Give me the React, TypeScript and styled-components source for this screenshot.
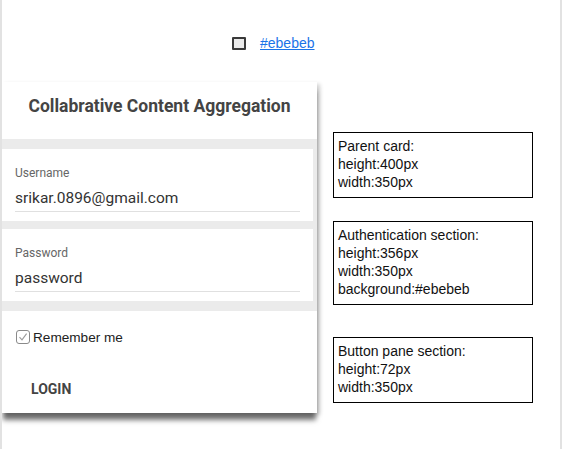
import React from "react";
import styled, { createGlobalStyle } from "styled-components";

const GlobalStyle = createGlobalStyle`
  html, body { margin: 0; padding: 0; background: #ffffff; }
  body { font-family: "Liberation Sans", Arial, sans-serif; }
  * { box-sizing: border-box; }
`;

const Frame = styled.div`
  width: 562px;
  height: 449px;
  border-left: 2px solid #e2e2e2;
  border-right: 2px solid #e2e2e2;
  overflow: hidden;
`;

const TopBar = styled.div`
  display: flex;
  align-items: center;
  gap: 14px;
  padding: 36px 0 0 230px;
  height: 50px;
`;

const Swatch = styled.span`
  display: inline-block;
  width: 14px;
  height: 13px;
  background: #ebebeb;
  border: 2px solid #3a3a3a;
  border-radius: 1px;
`;

const ColorLink = styled.a`
  font-family: "Liberation Sans", Arial, sans-serif;
  font-size: 14px;
  color: #1a73e8;
  text-decoration: underline;
  line-height: 16px;
`;

const Main = styled.div`
  display: flex;
  align-items: flex-start;
  margin-top: 32px;
`;

const Card = styled.div`
  width: 315px;
  height: 331px;
  background: #ffffff;
  display: flex;
  flex-direction: column;
  box-shadow: 0 8px 5px -1px rgba(0, 0, 0, 0.55), 3px 2px 4px rgba(0, 0, 0, 0.18);
`;

const Header = styled.div`
  height: 57px;
  padding-top: 13px;
  text-align: center;
  font-family: Roboto, "Noto Sans", sans-serif;
  font-weight: 700;
  font-size: 17.5px;
  line-height: 22px;
  color: #444444;
`;

const AuthSection = styled.div`
  background: #ebebeb;
  padding: 10px 0;
  display: flex;
  flex-direction: column;
  gap: 8px;
`;

const Field = styled.div`
  height: 72px;
  margin-right: 4px;
  background: #ffffff;
  padding: 17px 13px 0 13px;
  font-family: Roboto, "Noto Sans", sans-serif;
`;

const FieldLabel = styled.div`
  font-size: 12px;
  line-height: 14px;
  color: #666666;
  margin-bottom: 9px;
`;

const FieldValue = styled.div`
  font-size: 15.5px;
  line-height: 19px;
  color: #333333;
  padding-bottom: 3px;
  border-bottom: 1px solid #e0e0e0;
`;

const ButtonPane = styled.div`
  flex: 1;
  padding: 19px 0 0 14px;
  display: flex;
  flex-direction: column;
  align-items: flex-start;
`;

const RememberRow = styled.label`
  display: flex;
  align-items: center;
  gap: 3px;
  height: 14px;
  font-family: "Liberation Sans", Arial, sans-serif;
  font-size: 13.6px;
  color: #222222;
`;

const Check = styled.span`
  width: 14px;
  height: 14px;
  border: 1px solid #8a8a8a;
  border-radius: 3px;
  display: flex;
  align-items: center;
  justify-content: center;
  background: #fff;
`;

const LoginButton = styled.div`
  margin: 37px 0 0 15px;
  font-family: Roboto, "Noto Sans", sans-serif;
  font-weight: 700;
  font-size: 14px;
  line-height: 16px;
  color: #444444;
`;

const InfoColumn = styled.div`
  display: flex;
  flex-direction: column;
  margin-left: 16px;
  padding-top: 50px;
`;

const InfoBox = styled.div<{ $gap: number }>`
  width: 200px;
  border: 1px solid #000;
  padding: 4px 4px 6px 4px;
  margin-bottom: ${(p) => p.$gap}px;
  font-family: "Liberation Sans", Arial, sans-serif;
  font-size: 14px;
  line-height: 18px;
  color: #111;
`;

export default function App() {
  return (
    <>
      <GlobalStyle />
      <Frame>
        <TopBar>
          <Swatch />
          <ColorLink href="#">#ebebeb</ColorLink>
        </TopBar>
        <Main>
          <Card>
            <Header>Collabrative Content Aggregation</Header>
            <AuthSection>
              <Field>
                <FieldLabel>Username</FieldLabel>
                <FieldValue>srikar.0896@gmail.com</FieldValue>
              </Field>
              <Field>
                <FieldLabel>Password</FieldLabel>
                <FieldValue>password</FieldValue>
              </Field>
            </AuthSection>
            <ButtonPane>
              <RememberRow>
                <Check>
                  <svg width="10" height="10" viewBox="0 0 10 10">
                    <path d="M1.5 5.2 L4 7.8 L8.6 1.6" fill="none" stroke="#9a9a9a" strokeWidth="1.1" />
                  </svg>
                </Check>
                Remember me
              </RememberRow>
              <LoginButton>LOGIN</LoginButton>
            </ButtonPane>
          </Card>
          <InfoColumn>
            <InfoBox $gap={23}>
              Parent card:
              <br />
              height:400px
              <br />
              width:350px
            </InfoBox>
            <InfoBox $gap={32}>
              Authentication section:
              <br />
              height:356px
              <br />
              width:350px
              <br />
              background:#ebebeb
            </InfoBox>
            <InfoBox $gap={0}>
              Button pane section:
              <br />
              height:72px
              <br />
              width:350px
            </InfoBox>
          </InfoColumn>
        </Main>
      </Frame>
    </>
  );
}
